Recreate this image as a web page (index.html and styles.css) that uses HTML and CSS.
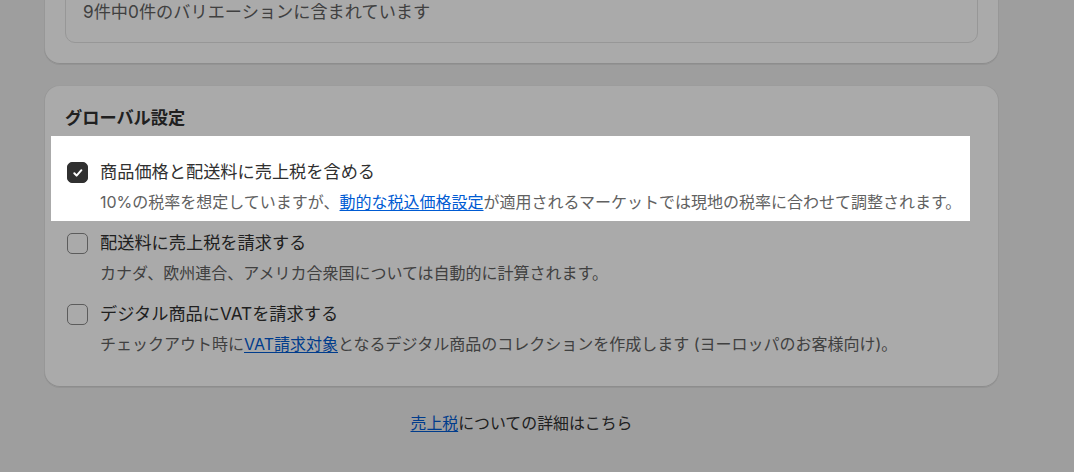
FILE: index.html
```html
<!DOCTYPE html>
<html lang="ja">
<head>
<meta charset="utf-8">
<title>税金設定</title>
<link rel="stylesheet" href="styles.css">
</head>
<body>
  <main class="page">
    <section class="card card-top">
      <div class="variant-box">
        <p class="variant-text">9件中0件のバリエーションに含まれています</p>
      </div>
    </section>

    <section class="card card-settings">
      <h2 class="card-title">グローバル設定</h2>
      <div class="options">
        <label class="option">
          <span class="checkbox is-checked">
            <svg viewBox="0 0 21 21" width="21" height="21" aria-hidden="true"><path d="M7.3 11.2 L9.6 13.6 L14.4 8.2" fill="none" stroke="#fff" stroke-width="2" stroke-linecap="round" stroke-linejoin="round"/></svg>
          </span>
          <span class="option-text">
            <span class="option-label">商品価格と配送料に売上税を含める</span>
            <span class="option-help">10%の税率を想定していますが、<a href="#" class="link">動的な税込価格設定</a>が適用されるマーケットでは現地の税率に合わせて調整されます。</span>
          </span>
        </label>

        <label class="option">
          <span class="checkbox"></span>
          <span class="option-text">
            <span class="option-label">配送料に売上税を請求する</span>
            <span class="option-help">カナダ、欧州連合、アメリカ合衆国については自動的に計算されます。</span>
          </span>
        </label>

        <label class="option">
          <span class="checkbox"></span>
          <span class="option-text">
            <span class="option-label">デジタル商品にVATを請求する</span>
            <span class="option-help">チェックアウト時に<a href="#" class="link">VAT請求対象</a>となるデジタル商品のコレクションを作成します (ヨーロッパのお客様向け)。</span>
          </span>
        </label>
      </div>
    </section>

    <p class="footer-help"><a href="#" class="link">売上税</a>についての詳細はこちら</p>
  </main>

  <div class="spotlight" aria-hidden="true"></div>
</body>
</html>
```

FILE: styles.css
```css
* { box-sizing: border-box; }

html, body {
  margin: 0;
  padding: 0;
}

body {
  position: relative;
  height: 472px;
  overflow: hidden;
  background: #ededed;
  font-family: Inter, "Noto Sans CJK JP", sans-serif;
  color: #303030;
}

.page {
  width: 999px;
  padding-left: 44px;
}

.card {
  background: #ffffff;
  border-radius: 16px;
  padding: 21px;
  box-shadow:
    0 1px 0 0 rgba(26, 26, 26, 0.07),
    inset 0 -1px 0 0 #d4d4d4,
    inset 1px 0 0 0 #e3e3e3,
    inset -1px 0 0 0 #e3e3e3,
    inset 0 1px 0 0 #ebebeb;
}

.card-top {
  margin-top: -40px;
}

.card + .card {
  margin-top: 21px;
}

.variant-box {
  border: 1px solid #e3e3e3;
  border-radius: 10px;
  padding: 17px 17px;
}

.variant-text {
  margin: 0;
  font-size: 17.2px;
  line-height: 26px;
  color: #616161;
}

.card-settings {
  padding-bottom: 32px;
}

.card-title {
  margin: 0;
  font-size: 17.2px;
  line-height: 24px;
  font-weight: 700;
  color: #303030;
}

.options {
  margin-top: 29px;
  display: flex;
  flex-direction: column;
  gap: 17px;
}

.option {
  display: flex;
  align-items: flex-start;
  gap: 12px;
}

.checkbox {
  flex: none;
  width: 21px;
  height: 21px;
  margin-top: 2.5px;
  margin-left: 2px;
  border: 1px solid #8a8a8a;
  border-radius: 5px;
  background: #ffffff;
  display: flex;
}

.checkbox.is-checked {
  background: #303030;
  border-color: #303030;
}

.checkbox svg {
  display: block;
  margin: -1px;
}

.option-text {
  display: flex;
  flex-direction: column;
}

.option-label {
  font-size: 17.2px;
  line-height: 26px;
  color: #303030;
}

.option-help {
  margin-top: 7px;
  font-size: 16px;
  line-height: 21px;
  color: #616161;
}

.link {
  color: #005bd3;
  text-decoration: underline;
  text-underline-offset: 2px;
}

.footer-help {
  margin: 25px 0 0;
  text-align: center;
  font-size: 15.9px;
  line-height: 24px;
  color: #303030;
}

.spotlight {
  position: absolute;
  left: 51px;
  top: 136px;
  width: 919px;
  height: 85px;
  box-shadow: 0 0 0 3000px rgba(0, 0, 0, 0.333);
  pointer-events: none;
}
```
